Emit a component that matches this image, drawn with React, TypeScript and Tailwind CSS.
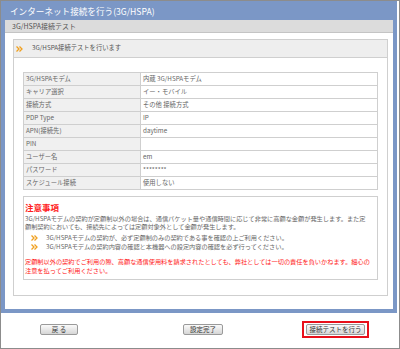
import React from 'react';

const rows: [string, string][] = [
  ['3G/HSPAモデム', '内蔵 3G/HSPAモデム'],
  ['キャリア選択', 'イー・モバイル'],
  ['接続方式', 'その他 接続方式'],
  ['PDP Type', 'IP'],
  ['APN(接続先)', 'daytime'],
  ['PIN', ''],
  ['ユーザー名', 'em'],
  ['パスワード', '********'],
  ['スケジュール接続', '使用しない'],
];

const Arrow: React.FC = () => (
  <svg width="7" height="6" viewBox="0 0 7 6" className="shrink-0">
    <path d="M0.5 0.5 L3 3 L0.5 5.5" fill="none" stroke="#f0a020" strokeWidth="1.3" />
    <path d="M3.5 0.5 L6 3 L3.5 5.5" fill="none" stroke="#f0a020" strokeWidth="1.3" />
  </svg>
);

const Btn: React.FC<{ label: string; w: string }> = ({ label, w }) => (
  <div
    className={`${w} h-[11px] flex items-center justify-center rounded-[2px] border border-[#9a9a9a] bg-gradient-to-b from-[#fafafa] to-[#d6d6d6] text-[6.5px] leading-none text-[#333]`}
  >
    {label}
  </div>
);

const App: React.FC = () => {
  return (
    <div
      className="w-[400px] h-[349px] border border-[#8c8c8c] bg-white flex flex-col"
      style={{ fontFamily: '"Noto Sans CJK JP", "Liberation Sans", sans-serif' }}
    >
      {/* blue frame */}
      <div className="w-[396px] h-[312px] bg-[#7b97c6] px-[4px] pb-[4px] flex flex-col">
        <div className="h-[19px] flex items-center pl-[5px] pt-[2px] text-white text-[8.6px] leading-none">
          インターネット接続を行う(3G/HSPA)
        </div>
        <div className="flex-1 bg-white flex flex-col">
          <div className="h-[13px] bg-[#dcdcdc] border-b border-[#c4c4c4] flex items-center pl-[7px] text-[7px] leading-none text-[#555]">
            3G/HSPA接続テスト
          </div>
          <div className="pl-[8px] pr-[5px] pt-[6px]">
            <div className="h-[257px] border border-[#cfcfcf] flex flex-col">
              <div className="h-[18px] bg-[#eeeeee] border-b border-[#cfcfcf] flex items-center gap-[9px] pl-[2px] text-[6.3px] leading-none text-[#555]">
                <Arrow />
                <span>3G/HSPA接続テストを行います</span>
              </div>
              <div className="px-[9px] pt-[14px]">
                <div className="border-t border-x border-[#cfcfcf]">
                  {rows.map(([k, v]) => (
                    <div key={k} className="flex h-[13px] border-b border-[#cfcfcf] text-[6.3px] leading-none text-[#666]">
                      <div className="w-[117px] bg-[#f0f0f0] border-r border-[#cfcfcf] flex items-center pl-[2px]">
                        {k}
                      </div>
                      <div className="flex-1 flex items-center pl-[2px]">{v}</div>
                    </div>
                  ))}
                </div>
                <div className="mt-[6px] h-[84px] border border-[#cfcfcf] pl-[1px] pt-[5px] text-[6.2px] leading-[8px] text-[#666]">
                  <div className="text-[8.5px] leading-[10px] font-bold text-[#ff2020]">注意事項</div>
                  <div className="mt-[3px] whitespace-nowrap">
                    3G/HSPAモデムの契約が定額制以外の場合は、通信パケット量や通信時間に応じて非常に高額な金額が発生します。また定
                    <br />
                    額制契約においても、接続先によっては定額対象外として金額が発生します。
                  </div>
                  <div className="mt-[3px] flex flex-col gap-[1px] pl-[6px]">
                    <div className="flex items-center gap-[8px] whitespace-nowrap h-[8px]">
                      <Arrow />
                      <span>3G/HSPAモデムの契約が、必ず定額制のみの契約である事を確認の上ご利用ください。</span>
                    </div>
                    <div className="flex items-center gap-[8px] whitespace-nowrap h-[8px]">
                      <Arrow />
                      <span>3G/HSPAモデムの契約内容の確認と本機器への設定内容の確認を必ず行ってください。</span>
                    </div>
                  </div>
                  <div className="mt-[6px] whitespace-nowrap leading-[9px] text-[#ff2020]">
                    定額制以外の契約でご利用の際、高額な通信使用料を請求されたとしても、弊社としては一切の責任を負いかねます。細心の
                    <br />
                    注意を払ってご利用ください。
                  </div>
                </div>
              </div>
            </div>
          </div>
        </div>
      </div>
      {/* buttons */}
      <div className="flex items-center h-[23px] mt-[5px]">
        <div className="ml-[39px]">
          <Btn label="戻 る" w="w-[38px]" />
        </div>
        <div className="ml-[105px]">
          <Btn label="設定完了" w="w-[40px]" />
        </div>
        <div className="ml-[79px] w-[67px] h-[17px] border-[2px] border-[#e8101a] flex items-center justify-center">
          <Btn label="接続テストを行う" w="w-[59px]" />
        </div>
      </div>
    </div>
  );
};

export default App;
